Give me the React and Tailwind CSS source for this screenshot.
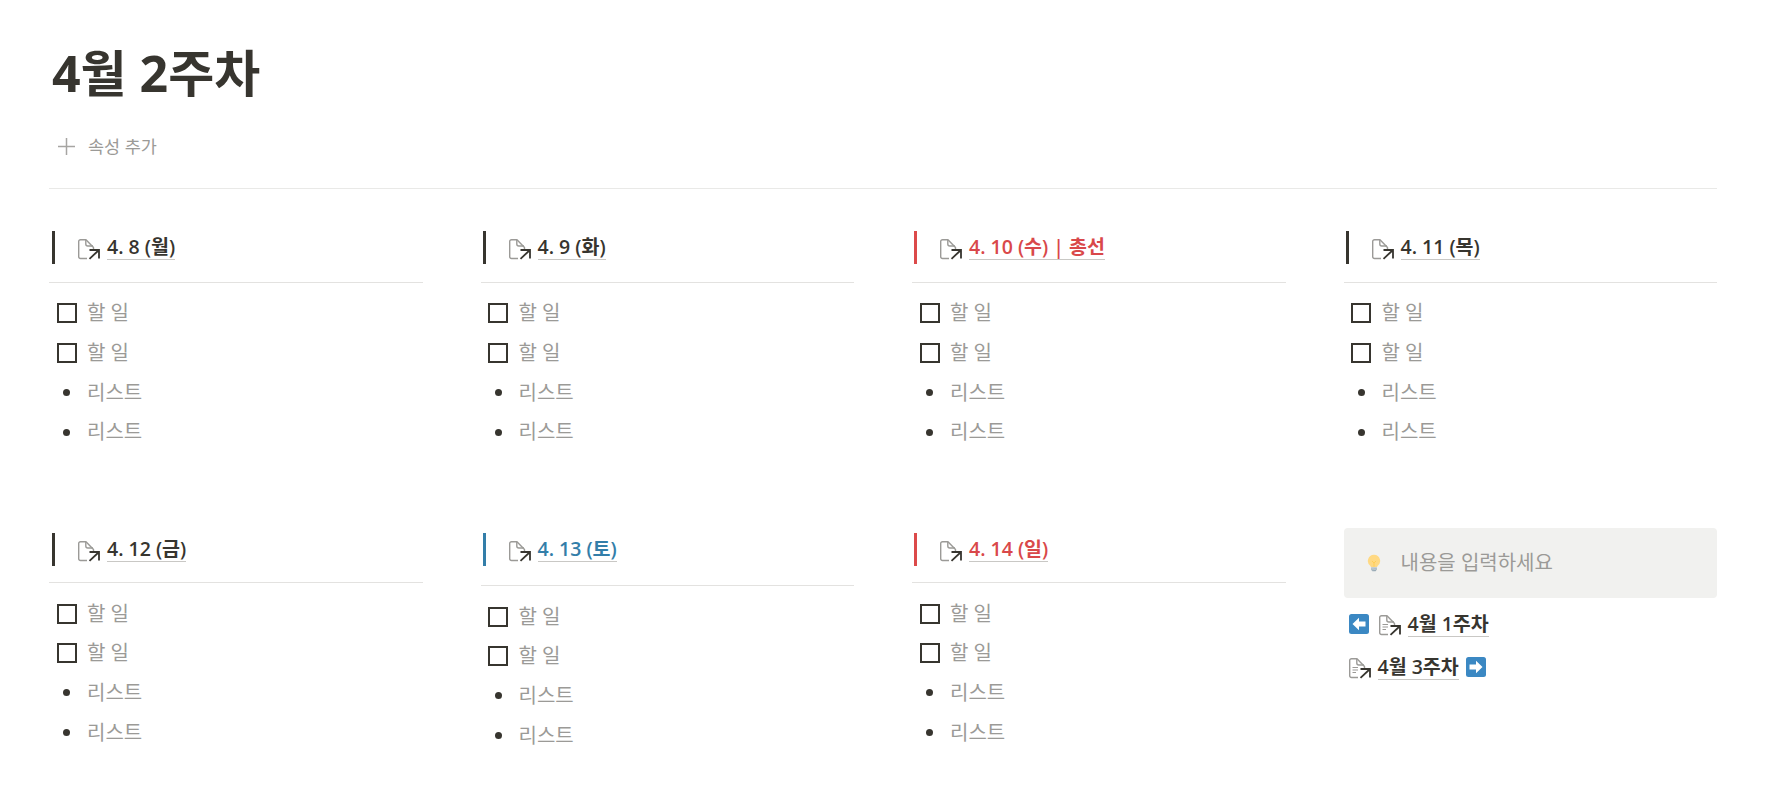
const FONT = { fontFamily: '"Open Sans", "Noto Sans CJK KR", sans-serif' };

function PlusIcon() {
  return (
    <svg width="17" height="17" viewBox="0 0 17 17" fill="none" className="shrink-0">
      <path d="M8.500 0V17M0 8.500H17" stroke="#a6a5a2" strokeWidth="1.500" />
    </svg>
  );
}

function PageLinkIcon({ lines = false }) {
  return (
    <svg width="22" height="21" viewBox="0 0 22 21" fill="none" className="mt-[3px] shrink-0">
      <path
        d="M9 19.500H2.500A1.800 1.800 0 0 1 0.700 17.700V2.500A1.800 1.800 0 0 1 2.500 0.700H8L15.500 8.500V10"
        stroke="#9b9a97"
        strokeWidth="1.400"
        strokeLinejoin="round"
      />
      <path d="M7.800 1V5A2 2 0 0 0 9.800 7H15" stroke="#9b9a97" strokeWidth="1.400" />
      {lines && <path d="M3.500 9.500H9M3.500 12H9M3.500 14.500H7" stroke="#9b9a97" strokeWidth="1.100" />}
      <path d="M11.500 11H21V19.500M21 11L11.500 19.800" stroke="#37352f" strokeWidth="1.800" />
    </svg>
  );
}

function ArrowBox({ dir }) {
  return (
    <svg width="20" height="20" viewBox="0 0 20 20" className="shrink-0">
      <rect width="20" height="20" rx="2.500" fill="#3b88c3" />
      {dir === 'left' ? (
        <path d="M3.500 10L10 3.800V7.500H16.500V12.500H10V16.200Z" fill="#fff" />
      ) : (
        <path d="M16.500 10L10 3.800V7.500H3.500V12.500H10V16.200Z" fill="#fff" />
      )}
    </svg>
  );
}

function Bulb() {
  return (
    <svg width="14" height="20" viewBox="0 0 17 21" className="shrink-0">
      <path d="M8.500 0.500A7.500 7.500 0 0 0 4.500 14.300V15.500H12.500V14.300A7.500 7.500 0 0 0 8.500 0.500Z" fill="#ffd983" />
      <path d="M6 8L8.500 10.500L11 8M8.500 10.500V15" stroke="#ffcc4d" strokeWidth="1" fill="none" />
      <path d="M5 16H12V18.500L10.500 20.500H6.500L5 18.500Z" fill="#99aab5" />
      <path d="M5 17.500L12 16.500M5 19L12 18" stroke="#ccd6dd" strokeWidth="0.800" />
    </svg>
  );
}

function Checkbox() {
  return (
    <div className="flex w-[29px] shrink-0 items-center justify-center">
      <div className="h-[20px] w-[20px] border-2 border-[#37352f]" />
    </div>
  );
}

function Bullet() {
  return (
    <div className="flex w-[29px] shrink-0 items-center justify-center">
      <div className="h-[7px] w-[7px] rounded-full bg-[#37352f]" />
    </div>
  );
}

function Row({ kind, text }) {
  return (
    <div className="flex h-[39.7px] items-center pl-[3px]">
      {kind === 'todo' ? <Checkbox /> : <Bullet />}
      <span className="ml-[6px] text-[20px] leading-[28px] text-[#9b9a97]">{text}</span>
    </div>
  );
}

function DayColumn({ label, accent, text, inset = 'pl-[2px]', gap = 'h-[18px]' }) {
  return (
    <div>
      <div className={`flex h-[33px] items-center ${inset}`}>
        <div className={`h-[33px] w-[3px] ${accent}`} />
        <div className="ml-[23px] flex items-center gap-[7px]">
          <PageLinkIcon />
          <span className={`mb-[2px] border-b border-[#c9c8c5] text-[19.500px] leading-[25px] font-semibold ${text}`}>{label}</span>
        </div>
      </div>
      <div className={gap} />
      <div className="h-px bg-[#e3e2e0]" />
      <div className="mt-[10.500px]">
        <Row kind="todo" text="할 일" />
        <Row kind="todo" text="할 일" />
        <Row kind="list" text="리스트" />
        <Row kind="list" text="리스트" />
      </div>
    </div>
  );
}

export default function App() {
  return (
    <div className="min-h-[806px] bg-white pt-[38px] text-[#37352f]" style={FONT}>
      <div className="mr-[52px] ml-[49px]">
        <h1 className="pl-[3px] text-[50px] leading-[70px] font-bold text-[#37352f]">4월 2주차</h1>

        <div className="mt-[21px] flex h-[34px] items-center pl-[9px] text-[#9b9a97]">
          <PlusIcon />
          <span className="ml-[13px] text-[17.500px]">속성 추가</span>
        </div>

        <div className="mt-[25px] h-px bg-[#e9e9e7]" />

        <div className="mt-[42px] grid grid-cols-4 gap-x-[58px] gap-y-[81px]">
          <DayColumn label="4. 8 (월)" accent="bg-[#37352f]" text="text-[#37352f]" inset="pl-[3px]" />
          <DayColumn label="4. 9 (화)" accent="bg-[#37352f]" text="text-[#37352f]" />
          <DayColumn label="4. 10 (수) | 총선" accent="bg-[#dc4a4a]" text="text-[#d9484a]" />
          <DayColumn label="4. 11 (목)" accent="bg-[#37352f]" text="text-[#37352f]" />
          <DayColumn label="4. 12 (금)" accent="bg-[#37352f]" text="text-[#37352f]" inset="pl-[3px]" gap="h-[16px]" />
          <DayColumn label="4. 13 (토)" accent="bg-[#337ea9]" text="text-[#337ea9]" gap="h-[19px]" />
          <DayColumn label="4. 14 (일)" accent="bg-[#dc4a4a]" text="text-[#d9484a]" gap="h-[16px]" />

          <div className="-mt-[5px]">
            <div className="flex h-[70px] items-center rounded-[4px] bg-[#f1f1ef] pl-[23px]">
              <Bulb />
              <span className="ml-[20px] text-[20px] text-[#9b9a97]">내용을 입력하세요</span>
            </div>
            <div className="mt-[6px] flex h-[40px] items-center pl-[5px]">
              <ArrowBox dir="left" />
              <div className="ml-[10px] flex items-center gap-[7px]">
                <PageLinkIcon lines />
                <span className="border-b border-[#c9c8c5] text-[19.500px] leading-[25px] font-semibold">4월 1주차</span>
              </div>
            </div>
            <div className="mt-[3px] flex h-[40px] items-center pl-[5px]">
              <PageLinkIcon lines />
              <span className="ml-[7px] border-b border-[#c9c8c5] text-[19.500px] leading-[25px] font-semibold">4월 3주차</span>
              <div className="ml-[7px]">
                <ArrowBox dir="right" />
              </div>
            </div>
          </div>
        </div>
      </div>
    </div>
  );
}
